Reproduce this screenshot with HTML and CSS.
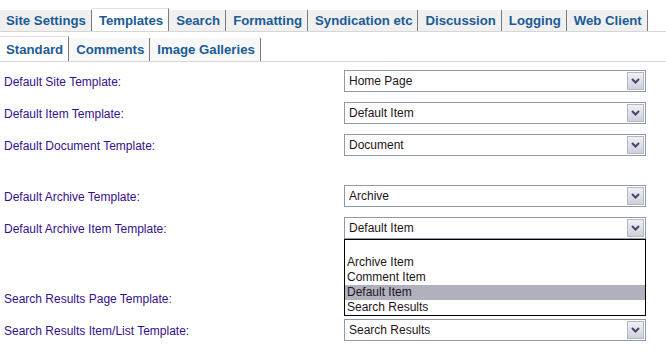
FILE: index.html
```html
<!DOCTYPE html>
<html lang="en">
<head>
    <meta charset="UTF-8">
    <title>Templates</title>
    <link rel="stylesheet" href="styles.css">
</head>
<body>

    <div class="tabs main-tabs">
        <span class="tab">Site Settings</span>
        <span class="tab active">Templates</span>
        <span class="tab">Search</span>
        <span class="tab">Formatting</span>
        <span class="tab">Syndication etc</span>
        <span class="tab">Discussion</span>
        <span class="tab">Logging</span>
        <span class="tab">Web Client</span>
    </div>

    <div class="tabs sub-tabs">
        <span class="tab active">Standard</span>
        <span class="tab">Comments</span>
        <span class="tab">Image Galleries</span>
    </div>

    <div class="form">
        <div class="row">
            <label>Default Site Template:</label>
            <div class="select"><span class="value">Home Page</span><span class="arrow"><svg width="9" height="6" viewBox="0 0 9 6"><path d="M1 1 L4.5 4.5 L8 1" fill="none" stroke="#3c4a6a" stroke-width="2"/></svg></span></div>
        </div>
        <div class="row">
            <label>Default Item Template:</label>
            <div class="select"><span class="value">Default Item</span><span class="arrow"><svg width="9" height="6" viewBox="0 0 9 6"><path d="M1 1 L4.5 4.5 L8 1" fill="none" stroke="#3c4a6a" stroke-width="2"/></svg></span></div>
        </div>
        <div class="row">
            <label>Default Document Template:</label>
            <div class="select"><span class="value">Document</span><span class="arrow"><svg width="9" height="6" viewBox="0 0 9 6"><path d="M1 1 L4.5 4.5 L8 1" fill="none" stroke="#3c4a6a" stroke-width="2"/></svg></span></div>
        </div>

        <div class="row gap-small">
            <label>Default Archive Template:</label>
            <div class="select"><span class="value">Archive</span><span class="arrow"><svg width="9" height="6" viewBox="0 0 9 6"><path d="M1 1 L4.5 4.5 L8 1" fill="none" stroke="#3c4a6a" stroke-width="2"/></svg></span></div>
        </div>
        <div class="row">
            <label>Default Archive Item Template:</label>
            <div class="select open"><span class="value">Default Item</span><span class="arrow"><svg width="9" height="6" viewBox="0 0 9 6"><path d="M1 1 L4.5 4.5 L8 1" fill="none" stroke="#3c4a6a" stroke-width="2"/></svg></span>
                <ul class="options">
                    <li>&nbsp;</li>
                    <li>Archive Item</li>
                    <li>Comment Item</li>
                    <li class="selected">Default Item</li>
                    <li>Search Results</li>
                </ul>
            </div>
        </div>

        <div class="row gap-large">
            <label>Search Results Page Template:</label>
            <div class="select"><span class="value"></span><span class="arrow"><svg width="9" height="6" viewBox="0 0 9 6"><path d="M1 1 L4.5 4.5 L8 1" fill="none" stroke="#3c4a6a" stroke-width="2"/></svg></span></div>
        </div>
        <div class="row">
            <label>Search Results Item/List Template:</label>
            <div class="select"><span class="value">Search Results</span><span class="arrow"><svg width="9" height="6" viewBox="0 0 9 6"><path d="M1 1 L4.5 4.5 L8 1" fill="none" stroke="#3c4a6a" stroke-width="2"/></svg></span></div>
        </div>
    </div>

</body>
</html>
```

FILE: styles.css
```css
body {
    font-family: "Liberation Sans", Arial, sans-serif;
    margin: 0;
    padding: 0;
    background-color: #fff;
}

.tabs {
    display: flex;
    border-bottom: 1px solid #d6d6d6;
}

.main-tabs {
    margin-top: 8px;
    height: 23px;
}

.sub-tabs {
    margin-top: 4px;
    height: 25px;
}

.tab {
    display: flex;
    align-items: center;
    padding: 0 5px 0 7px;
    font-size: 13.2px;
    font-weight: bold;
    color: #1b5b96;
    background-color: #f0f0f0;
    border-right: 1px solid #7a7a7a;
    box-shadow: 1px 0 0 #fff;
    margin: 2px 0 0;
}

.sub-tabs .tab {
    background-color: #f7f7f7;
}

.tab:first-child {
    padding-left: 6px;
}

.tab.active,
.sub-tabs .tab.active {
    background-color: #fff;
    margin: 0;
    border-top: 1px solid #e2e2e2;
}

.form {
    margin-top: 3px;
    padding-left: 4px;
}

.row {
    display: flex;
    align-items: center;
    height: 32px;
}

.row.gap-small {
    margin-top: 19px;
}

.row.gap-large {
    margin-top: 38px;
}

label {
    width: 340px;
    font-size: 12px;
    color: #36108c;
    padding-top: 2px;
}

.select {
    position: relative;
    display: flex;
    align-items: center;
    justify-content: space-between;
    width: 300px;
    height: 20px;
    border: 1px solid #8d9aae;
    background-color: #fff;
}

.select .value {
    font-size: 12px;
    color: #1e1420;
    padding-left: 4px;
}

.select .arrow {
    display: flex;
    align-items: center;
    justify-content: center;
    width: 15px;
    height: 16px;
    margin-right: 1px;
    margin-left: auto;
    border: 1px solid #b3b8c6;
    background: linear-gradient(#f0f0f4, #cfd0da);
}

.options {
    position: absolute;
    top: 21px;
    left: -1px;
    width: 300px;
    margin: 0;
    padding: 0;
    list-style: none;
    border: 1px solid #000;
    background-color: #fff;
    z-index: 2;
}

.options li {
    height: 15px;
    line-height: 15px;
    font-size: 12px;
    color: #1e1420;
    padding-left: 2px;
}

.options li.selected {
    background-color: #b0b1bd;
}
```
